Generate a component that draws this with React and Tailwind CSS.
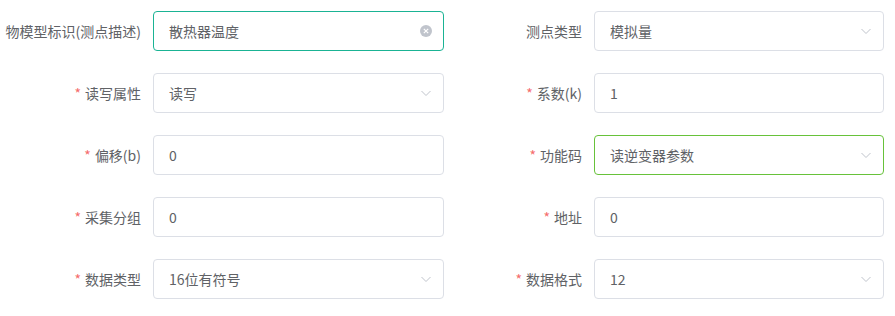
import React from "react";

const font = { fontFamily: '"Microsoft YaHei", "Noto Sans CJK SC", "Liberation Sans", sans-serif' };

function Chevron() {
  return (
    <svg width="14" height="14" viewBox="0 0 14 14" className="shrink-0">
      <path d="M2.5 5 L7 9.5 L11.5 5" fill="none" stroke="#c0c4cc" strokeWidth="1" />
    </svg>
  );
}

function Clear() {
  return (
    <svg width="14" height="14" viewBox="0 0 14 14" className="shrink-0">
      <circle cx="7" cy="7" r="6" fill="#c0c4cc" />
      <path d="M4.8 4.8 L9.2 9.2 M9.2 4.8 L4.8 9.2" stroke="#fff" strokeWidth="1.2" />
    </svg>
  );
}

function Field({ label, required, value, type, border, labelW, inputW }) {
  const borderCls =
    border === "teal"
      ? "border-[#1ab394]"
      : border === "green"
      ? "border-[#67c23a]"
      : "border-[#dcdfe6]";
  return (
    <div className="flex items-center">
      <div className={`${labelW} pr-3 text-right text-[14px] text-[#606266] whitespace-nowrap`}>
        {required && <span className="text-[#f56c6c] mr-1">*</span>}
        {label}
      </div>
      <div
        className={`${inputW} h-[40px] border ${borderCls} rounded-[4px] bg-white flex items-center pl-[15px] pr-[10px]`}
      >
        <span className="flex-1 text-[14px] text-[#606266]">{value}</span>
        {type === "select" && <Chevron />}
        {type === "clear" && <Clear />}
      </div>
    </div>
  );
}

export default function App() {
  const rows = [
    [
      { label: "物模型标识(测点描述)", value: "散热器温度", type: "clear", border: "teal" },
      { label: "测点类型", value: "模拟量", type: "select" },
    ],
    [
      { label: "读写属性", required: true, value: "读写", type: "select" },
      { label: "系数(k)", required: true, value: "1" },
    ],
    [
      { label: "偏移(b)", required: true, value: "0" },
      { label: "功能码", required: true, value: "读逆变器参数", type: "select", border: "green" },
    ],
    [
      { label: "采集分组", required: true, value: "0" },
      { label: "地址", required: true, value: "0" },
    ],
    [
      { label: "数据类型", required: true, value: "16位有符号", type: "select" },
      { label: "数据格式", required: true, value: "12", type: "select" },
    ],
  ];
  return (
    <div className="w-[895px] h-[316px] bg-white pt-[11px]" style={font}>
      <div className="flex flex-col gap-[22px]">
        {rows.map((r, i) => (
          <div key={i} className="flex">
            <Field {...r[0]} labelW="w-[153px]" inputW="w-[291px]" />
            <Field {...r[1]} labelW="w-[150px]" inputW="w-[290px]" />
          </div>
        ))}
      </div>
    </div>
  );
}
